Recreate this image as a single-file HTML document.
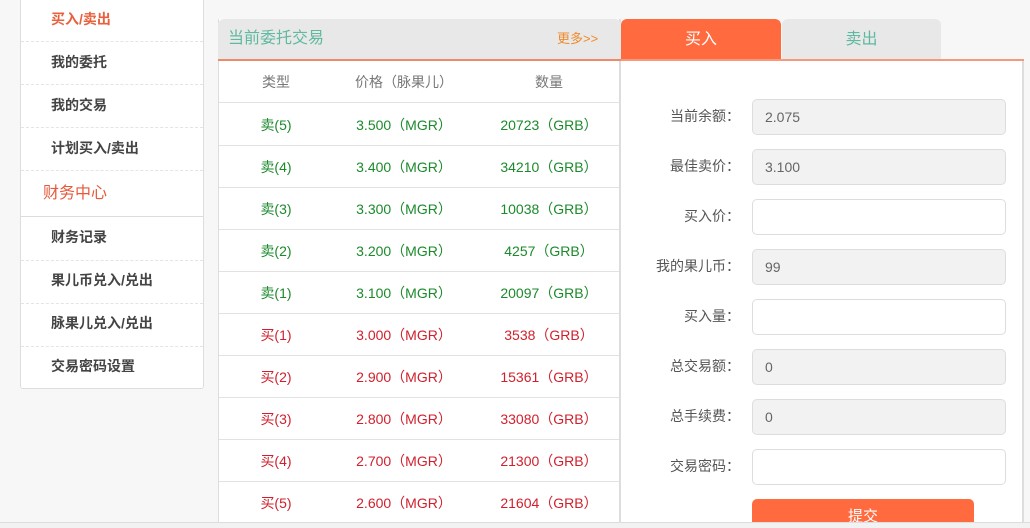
<!DOCTYPE html>
<html><head><meta charset="utf-8"><style>
*{margin:0;padding:0;box-sizing:border-box}
html{overflow:hidden;width:1030px;height:528px}
body{width:1030px;height:528px;background:#f7f7f7;position:relative;overflow:hidden;font-family:"Liberation Sans","Noto Sans CJK SC",sans-serif;}
.abs{position:absolute}
.side{left:20px;top:-2px;width:184px;height:391px;background:#fff;border:1px solid #ddd;border-radius:0 0 3px 3px}
.mi{position:absolute;left:30px;font-size:14px;font-weight:bold;color:#444;line-height:20px}
.dash{position:absolute;left:0;width:182px;border-top:1px dashed #e4e4e4}
.lp{left:218px;top:19px;width:403px;height:503px;background:#fff;border-left:1px solid #ddd;border-right:2px solid #ddd}
.lh{left:218px;top:19px;width:403px;height:40px;background:#e8e8e8;border-radius:6px 6px 0 0}
.row{position:absolute;left:219px;width:400px;height:42px;border-bottom:1px solid #e2e2e2;font-size:14px;line-height:42px}
.row span{position:absolute;top:0;transform:translateX(-50%);white-space:nowrap}
.g{color:#1b8a2b}.r{color:#d0202d}
.rp{left:621px;top:59px;width:403px;height:463px;background:#fff;border-right:2px solid #ddd}
.lab{position:absolute;right:290px;font-size:14px;color:#555;text-align:right;width:120px;line-height:20px}
.inp{position:absolute;left:752px;width:254px;height:36px;border:1px solid #ddd;border-radius:5px;background:#fff;font-size:14px;color:#666;padding-left:12px;line-height:34px}
.inp.d{background:#f2f2f2}
</style></head><body>
<div class="abs side">
<div class="mi" style="top:10px;color:#e8603c">买入/卖出</div>
<div class="dash" style="top:42px"></div>
<div class="mi" style="top:53px">我的委托</div>
<div class="dash" style="top:85px"></div>
<div class="mi" style="top:96px">我的交易</div>
<div class="dash" style="top:128px"></div>
<div class="mi" style="top:139px">计划买入/卖出</div>
<div class="dash" style="top:171px"></div>
<div class="mi" style="top:185px;left:22px;font-size:16px;font-weight:normal;color:#e8583a">财务中心</div>
<div style="position:absolute;left:0;top:217px;width:182px;border-top:1px solid #ddd"></div>
<div class="mi" style="top:228px">财务记录</div>
<div class="dash" style="top:261px"></div>
<div class="mi" style="top:271px">果儿币兑入/兑出</div>
<div class="dash" style="top:304px"></div>
<div class="mi" style="top:314px">脉果儿兑入/兑出</div>
<div class="dash" style="top:347px"></div>
<div class="mi" style="top:357px">交易密码设置</div>
</div>
<div class="abs lp"></div>
<div class="abs lh"><div class="abs" style="left:10px;top:9px;font-size:16px;line-height:22px;color:#5fb9a0">当前委托交易</div><div class="abs" style="left:339px;top:11px;font-size:13px;line-height:18px;color:#f08a2a">更多&gt;&gt;</div></div>
<div class="abs" style="left:218px;top:59px;width:403px;height:2px;background:#ee8a68"></div>
<div class="row" style="top:61px;color:#777"><span style="left:57px">类型</span><span style="left:185px">价格（脉果儿）</span><span style="left:330px">数量</span></div>
<div class="row g" style="top:104px"><span style="left:57px">卖(5)</span><span style="left:185px">3.500（MGR）</span><span style="left:330px">20723（GRB）</span></div>
<div class="row g" style="top:146px"><span style="left:57px">卖(4)</span><span style="left:185px">3.400（MGR）</span><span style="left:330px">34210（GRB）</span></div>
<div class="row g" style="top:188px"><span style="left:57px">卖(3)</span><span style="left:185px">3.300（MGR）</span><span style="left:330px">10038（GRB）</span></div>
<div class="row g" style="top:230px"><span style="left:57px">卖(2)</span><span style="left:185px">3.200（MGR）</span><span style="left:330px">4257（GRB）</span></div>
<div class="row g" style="top:272px"><span style="left:57px">卖(1)</span><span style="left:185px">3.100（MGR）</span><span style="left:330px">20097（GRB）</span></div>
<div class="row r" style="top:314px"><span style="left:57px">买(1)</span><span style="left:185px">3.000（MGR）</span><span style="left:330px">3538（GRB）</span></div>
<div class="row r" style="top:356px"><span style="left:57px">买(2)</span><span style="left:185px">2.900（MGR）</span><span style="left:330px">15361（GRB）</span></div>
<div class="row r" style="top:398px"><span style="left:57px">买(3)</span><span style="left:185px">2.800（MGR）</span><span style="left:330px">33080（GRB）</span></div>
<div class="row r" style="top:440px"><span style="left:57px">买(4)</span><span style="left:185px">2.700（MGR）</span><span style="left:330px">21300（GRB）</span></div>
<div class="row r" style="top:482px;border:none"><span style="left:57px">买(5)</span><span style="left:185px">2.600（MGR）</span><span style="left:330px">21604（GRB）</span></div>
<div class="abs rp"></div>
<div class="abs" style="left:621px;top:19px;width:160px;height:41px;background:#ff6a3f;border-radius:6px 6px 0 0;color:#fff;font-size:16px;text-align:center;line-height:41px">买入</div>
<div class="abs" style="left:782px;top:19px;width:159px;height:40px;background:#e8e8e8;border-radius:6px 6px 0 0;color:#5fb9a0;font-size:16px;text-align:center;line-height:41px">卖出</div>
<div class="abs" style="left:621px;top:59px;width:403px;height:2px;background:#f39a7e"></div>
<div class="lab" style="top:106px">当前余额：</div><div class="inp d" style="top:99px">2.075</div>
<div class="lab" style="top:156px">最佳卖价：</div><div class="inp d" style="top:149px">3.100</div>
<div class="lab" style="top:206px">买入价：</div><div class="inp" style="top:199px"></div>
<div class="lab" style="top:256px">我的果儿币：</div><div class="inp d" style="top:249px">99</div>
<div class="lab" style="top:306px">买入量：</div><div class="inp" style="top:299px"></div>
<div class="lab" style="top:356px">总交易额：</div><div class="inp d" style="top:349px">0</div>
<div class="lab" style="top:406px">总手续费：</div><div class="inp d" style="top:399px">0</div>
<div class="lab" style="top:456px">交易密码：</div><div class="inp" style="top:449px"></div>
<div class="abs" style="left:752px;top:499px;width:222px;height:23px;background:#ff6a3f;border-radius:5px 5px 0 0;color:#fff;font-size:15px;text-align:center;line-height:36px;overflow:hidden">提交</div>
<div class="abs" style="left:0;top:522px;width:1030px;height:6px;background:#f2f2f2;border-top:1px solid #ddd"></div>
</body></html>
